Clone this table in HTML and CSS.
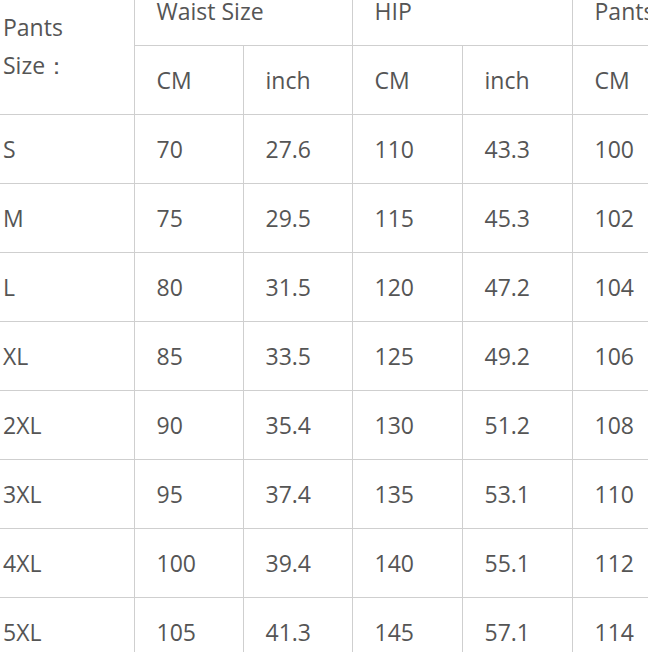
FILE: index.html
```html
<!DOCTYPE html>
<html>
<head>
<meta charset="utf-8">
<link rel="stylesheet" href="styles.css">
</head>
<body>
<div class="frame">
<table class="size-table">
  <colgroup>
    <col class="c-first">
    <col class="c-narrow"><col class="c-narrow">
    <col class="c-wide"><col class="c-wide">
    <col class="c-wide"><col class="c-wide">
  </colgroup>
  <tr>
    <td rowspan="2" class="first">Pants<br>Size：</td>
    <td colspan="2">Waist Size</td>
    <td colspan="2">HIP</td>
    <td colspan="2">Pants Length</td>
  </tr>
  <tr>
    <td>CM</td><td>inch</td><td>CM</td><td>inch</td><td>CM</td><td>inch</td>
  </tr>
  <tr><td class="first">S</td><td>70</td><td>27.6</td><td>110</td><td>43.3</td><td>100</td><td>39.4</td></tr>
  <tr><td class="first">M</td><td>75</td><td>29.5</td><td>115</td><td>45.3</td><td>102</td><td>40.2</td></tr>
  <tr><td class="first">L</td><td>80</td><td>31.5</td><td>120</td><td>47.2</td><td>104</td><td>40.9</td></tr>
  <tr><td class="first">XL</td><td>85</td><td>33.5</td><td>125</td><td>49.2</td><td>106</td><td>41.7</td></tr>
  <tr><td class="first">2XL</td><td>90</td><td>35.4</td><td>130</td><td>51.2</td><td>108</td><td>42.5</td></tr>
  <tr><td class="first">3XL</td><td>95</td><td>37.4</td><td>135</td><td>53.1</td><td>110</td><td>43.3</td></tr>
  <tr><td class="first">4XL</td><td>100</td><td>39.4</td><td>140</td><td>55.1</td><td>112</td><td>44.1</td></tr>
  <tr><td class="first">5XL</td><td>105</td><td>41.3</td><td>145</td><td>57.1</td><td>114</td><td>44.9</td></tr>
</table>
</div>
</body>
</html>
```
FILE: styles.css
```css
html, body {
  margin: 0;
  padding: 0;
  background: #fff;
}
.frame {
  width: 648px;
  height: 652px;
  overflow: hidden;
}
.size-table {
  border-collapse: collapse;
  table-layout: fixed;
  margin: -23px 0 0 -19px;
  font-family: "Open Sans", "Noto Sans", sans-serif;
  font-size: 23px;
  color: #555;
  width: 811px;
}
.c-first { width: 153px; }
.c-narrow { width: 109px; }
.c-wide { width: 110px; }
.size-table td {
  border: 1px solid #cfcfcf;
  height: 68px;
  padding: 0 0 0 22px;
  vertical-align: middle;
  white-space: nowrap;
  overflow: hidden;
  line-height: 1;
}
.size-table td.first {
  border-left: none;
  line-height: 38px;
  white-space: normal;
}
.size-table tr:first-child td {
  border-top: none;
}
```
